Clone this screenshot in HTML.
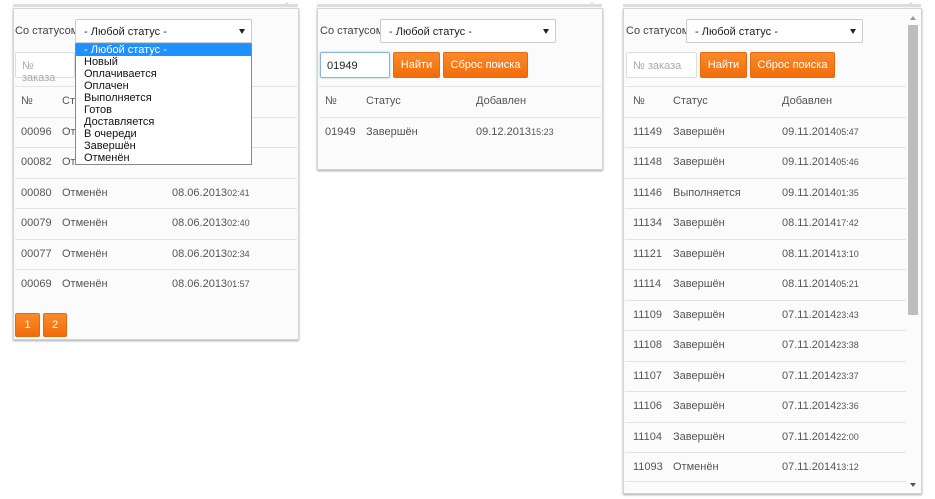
<!DOCTYPE html>
<html><head><meta charset="utf-8"><style>
*{box-sizing:border-box}
body{margin:0;width:935px;height:499px;background:#fff;font-family:"Liberation Sans",sans-serif;font-size:11px;color:#555;position:relative;overflow:hidden}
.p{position:absolute;background:#fbfbfb;border:1px solid #d4d4d4;box-shadow:0 1px 2px rgba(0,0,0,.35)}
.top{position:absolute;height:3px;background:#ddd;top:4px}
.car{position:absolute;top:2px;width:0;height:0;border-left:5px solid transparent;border-right:5px solid transparent;border-bottom:5px solid #ddd}
.lbl{position:absolute;font-size:11px;color:#444}
.sel{position:absolute;height:24px;border:1px solid #ccc;background:#fff;border-radius:2px;font-size:11px;color:#222;padding:6px 8px}
.sel:after{content:"";position:absolute;right:6px;top:9px;border-left:3px solid transparent;border-right:3px solid transparent;border-top:5px solid #222}
.inp{position:absolute;height:26px;border:1px solid #ddd;background:#fff;border-radius:2px;font-size:11px;padding:7px 6px;color:#aaa}
.btn{position:absolute;height:26px;background:linear-gradient(#fb8a2a,#f26c0b);border:1px solid #e8680e;border-radius:2px;color:#fff;font-size:11px;text-align:center;line-height:24px}
.row{position:absolute;height:30.5px;border-top:1px solid #e4e4e4;line-height:29px}
.row span{position:absolute}
.row small{font-size:9px}
.dd{position:absolute;left:75px;top:43px;width:177px;height:122px;background:#fff;border:1px solid #888;font-size:11px;color:#111;line-height:12px}
.dd div{padding-left:8px;height:12px}
</style></head><body>

<!-- panel 1 -->
<div class="top" style="left:13px;width:285px"></div><div class="car" style="left:282px"></div>
<div class="p" style="left:13px;top:8px;width:286px;height:332px"></div>
<div class="lbl" style="left:15px;top:25px">Со статусом:</div>
<div class="sel" style="left:75px;top:19px;width:177px">- Любой статус -</div>
<div class="inp" style="left:15px;top:52px;width:60px">№ заказа</div>
<div class="row" style="left:15px;top:86px;width:282px"><span style="left:6px">№</span><span style="left:47px">Статус</span></div>
<div class="row" style="left:15px;top:116.5px;width:282px"><span style="left:6px">00096</span><span style="left:47px">Отменён</span></div>
<div class="row" style="left:15px;top:147px;width:282px"><span style="left:6px">00082</span><span style="left:47px">Отменён</span></div>
<div class="row" style="left:15px;top:177.5px;width:282px"><span style="left:6px">00080</span><span style="left:47px">Отменён</span><span style="left:157px">08.06.2013<small>02:41</small></span></div>
<div class="row" style="left:15px;top:208px;width:282px"><span style="left:6px">00079</span><span style="left:47px">Отменён</span><span style="left:157px">08.06.2013<small>02:40</small></span></div>
<div class="row" style="left:15px;top:238.5px;width:282px"><span style="left:6px">00077</span><span style="left:47px">Отменён</span><span style="left:157px">08.06.2013<small>02:34</small></span></div>
<div class="row" style="left:15px;top:269px;width:282px"><span style="left:6px">00069</span><span style="left:47px">Отменён</span><span style="left:157px">08.06.2013<small>01:57</small></span></div>
<div class="btn" style="left:15px;top:313px;width:25px;height:24px;line-height:22px">1</div>
<div class="btn" style="left:43px;top:313px;width:24px;height:24px;line-height:22px">2</div>
<div class="dd">
<div style="background:#1e90ff;color:#fff">- Любой статус -</div>
<div>Новый</div><div>Оплачивается</div><div>Оплачен</div><div>Выполняется</div><div>Готов</div><div>Доставляется</div><div>В очереди</div><div>Завершён</div><div>Отменён</div>
</div>

<!-- panel 2 -->
<div class="top" style="left:317px;width:285px"></div><div class="car" style="left:587px"></div>
<div class="p" style="left:317px;top:8px;width:286px;height:162px"></div>
<div class="lbl" style="left:320px;top:25px">Со статусом:</div>
<div class="sel" style="left:380px;top:19px;width:176px">- Любой статус -</div>
<div class="inp" style="left:320px;top:52px;width:70px;border-color:#8ab4dd;color:#222;box-shadow:0 0 2px #9cc">01949</div>
<div class="btn" style="left:393px;top:52px;width:47px">Найти</div>
<div class="btn" style="left:443px;top:52px;width:85px">Сброс поиска</div>
<div class="row" style="left:319px;top:86px;width:282px"><span style="left:6px">№</span><span style="left:47px">Статус</span><span style="left:157px">Добавлен</span></div>
<div class="row" style="left:319px;top:116.5px;width:282px"><span style="left:6px">01949</span><span style="left:47px">Завершён</span><span style="left:157px">09.12.2013<small>15:23</small></span></div>

<!-- panel 3 -->
<div class="top" style="left:623px;width:298px"></div><div class="car" style="left:906px"></div>
<div class="p" style="left:623px;top:8px;width:299px;height:486px"></div>
<div class="lbl" style="left:626px;top:25px">Со статусом:</div>
<div class="sel" style="left:686px;top:19px;width:177px">- Любой статус -</div>
<div class="inp" style="left:626px;top:52px;width:71px">№ заказа</div>
<div class="btn" style="left:700px;top:52px;width:47px">Найти</div>
<div class="btn" style="left:750px;top:52px;width:85px">Сброс поиска</div>
<div style="position:absolute;left:908px;top:25px;width:10px;height:290px;background:#bdbdbd"></div>
<div style="position:absolute;left:910px;top:16px;border-left:3px solid transparent;border-right:3px solid transparent;border-bottom:4px solid #999"></div>
<div style="position:absolute;left:910px;top:483px;border-left:3px solid transparent;border-right:3px solid transparent;border-top:4px solid #555"></div>
<div class="row" style="left:625px;top:86px;width:281px"><span style="left:8px">№</span><span style="left:48px">Статус</span><span style="left:157px">Добавлен</span></div>
<div class="row" style="left:625px;top:116.5px;width:281px"><span style="left:8px">11149</span><span style="left:48px">Завершён</span><span style="left:157px">09.11.2014<small>05:47</small></span></div>
<div class="row" style="left:625px;top:147px;width:281px"><span style="left:8px">11148</span><span style="left:48px">Завершён</span><span style="left:157px">09.11.2014<small>05:46</small></span></div>
<div class="row" style="left:625px;top:177.5px;width:281px"><span style="left:8px">11146</span><span style="left:48px">Выполняется</span><span style="left:157px">09.11.2014<small>01:35</small></span></div>
<div class="row" style="left:625px;top:208px;width:281px"><span style="left:8px">11134</span><span style="left:48px">Завершён</span><span style="left:157px">08.11.2014<small>17:42</small></span></div>
<div class="row" style="left:625px;top:238.5px;width:281px"><span style="left:8px">11121</span><span style="left:48px">Завершён</span><span style="left:157px">08.11.2014<small>13:10</small></span></div>
<div class="row" style="left:625px;top:269px;width:281px"><span style="left:8px">11114</span><span style="left:48px">Завершён</span><span style="left:157px">08.11.2014<small>05:21</small></span></div>
<div class="row" style="left:625px;top:299.5px;width:281px"><span style="left:8px">11109</span><span style="left:48px">Завершён</span><span style="left:157px">07.11.2014<small>23:43</small></span></div>
<div class="row" style="left:625px;top:330px;width:281px"><span style="left:8px">11108</span><span style="left:48px">Завершён</span><span style="left:157px">07.11.2014<small>23:38</small></span></div>
<div class="row" style="left:625px;top:360.5px;width:281px"><span style="left:8px">11107</span><span style="left:48px">Завершён</span><span style="left:157px">07.11.2014<small>23:37</small></span></div>
<div class="row" style="left:625px;top:391px;width:281px"><span style="left:8px">11106</span><span style="left:48px">Завершён</span><span style="left:157px">07.11.2014<small>23:36</small></span></div>
<div class="row" style="left:625px;top:421.5px;width:281px"><span style="left:8px">11104</span><span style="left:48px">Завершён</span><span style="left:157px">07.11.2014<small>22:00</small></span></div>
<div class="row" style="left:625px;top:452px;width:281px;height:30px;border-bottom:1px solid #e4e4e4"><span style="left:8px">11093</span><span style="left:48px">Отменён</span><span style="left:157px">07.11.2014<small>13:12</small></span></div>

</body></html>
